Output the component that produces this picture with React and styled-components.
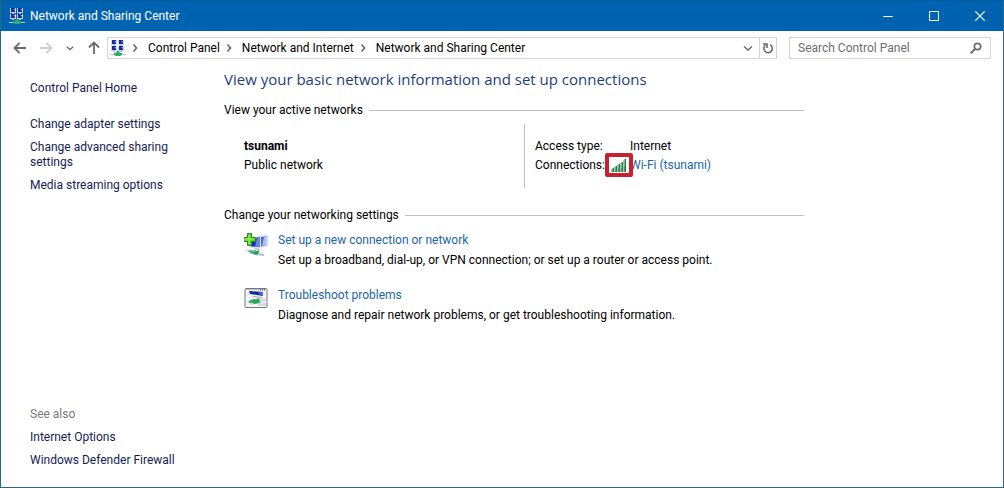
import styled, { createGlobalStyle } from "styled-components";

const crumbs = ["Control Panel", "Network and Internet", "Network and Sharing Center"];

const tasks = [
    "Change adapter settings",
    "Change advanced sharing settings",
    "Media streaming options",
];

const related = ["Internet Options", "Windows Defender Firewall"];

const NetworkIcon = () => (
    <svg width="16" height="16" viewBox="0 0 16 16" aria-hidden="true">
        {[[1, 0], [8, 0], [1, 6], [8, 6]].map(([x, y]) => (
            <g key={`${x}-${y}`}>
                <rect x={x} y={y} width="6" height="5" fill="#c6d2ee" />
                <rect x={x + 1} y={y} width="4" height="4" fill="#1a2a9c" />
                <path d={`M${x + 3} ${y + 1}h2v2z`} fill="#7f9be8" />
                <rect x={x + 2} y={y + 5} width="2" height="1" fill="#aeb8c6" />
            </g>
        ))}
        <path d="M7 11h2l1 2h2v2l-2 1H6l-2-1v-2h2z" fill="#2fae6b" />
        <path d="M0 14h4v1H0zM12 14h4v1h-4z" fill="#b5cdd0" />
    </svg>
);

const Chevron = ({ down, size = 10 }) => (
    <svg width={size} height={size} viewBox="0 0 10 10" fill="none" stroke="currentColor" strokeWidth="1.6" aria-hidden="true">
        <path d={down ? "M1 3.500 5 7l4-3.500" : "M3.500 1.500 6.500 5l-3 3.500"} />
    </svg>
);

const Arrow = ({ turn = 0 }) => (
    <svg width="14" height="14" viewBox="0 0 14 14" fill="none" stroke="currentColor" strokeWidth="1.8" aria-hidden="true">
        <path transform={`rotate(${turn} 7 7)`} d="M13 7H2M6.500 2 1.500 7l5 5" />
    </svg>
);

const RefreshIcon = () => (
    <svg width="12" height="12" viewBox="0 0 12 12" fill="none" stroke="currentColor" strokeWidth="1.6" aria-hidden="true">
        <path d="M8.200 2.800A4.200 4.200 0 1 1 3.400 3.200" />
        <path d="M1 2h4v4" />
    </svg>
);

const SearchIcon = () => (
    <svg width="12" height="12" viewBox="0 0 12 12" fill="none" stroke="currentColor" aria-hidden="true">
        <circle cx="7.500" cy="4.500" r="3.200" strokeWidth="1.700" />
        <path d="M5.200 6.800.8 11.200" strokeWidth="2" />
    </svg>
);

const SignalIcon = () => (
    <svg width="16" height="14" viewBox="0 0 16 14" aria-hidden="true">
        {[3, 5, 7, 9, 12].map((h, i) => (
            <g key={h}>
                <path d={`M${i * 3 + 0.5} ${14 - h}l2.500-1.500v${h + 1.5}h-2.500z`} fill="#4a9a66" />
                <path d={`M${i * 3 + 0.5} ${14 - h}l1-.6v${h * 0.6}h-1z`} fill="#a5d3b2" />
                <path d={`M${i * 3 + 2.4} ${13 - h}h.6v${h + 1}h-.6z`} fill="#24603a" />
            </g>
        ))}
    </svg>
);

const SetupIcon = () => (
    <svg width="24" height="24" viewBox="0 0 24 24" aria-hidden="true">
        <path d="m15 3 9-1v11l-8 2z" fill="#cbd6f2" />
        <path d="m17 4 5-.500V12l-5 1.500z" fill="#4a66cf" />
        <path d="m20 3.700 2-.2V12l-4 1z" fill="#a9bdf2" />
        <path d="M6 5 17 3v12L6 14.500z" fill="#d5ddf0" />
        <path d="m7 6 9-2v10l-9-.500z" fill="#1730b4" />
        <path d="m13 4.600 3-.6v10l-5-.300z" fill="#6a82e0" />
        <path d="m11 15 4 .500 2 1.500-7-.500z" fill="#b5bcc9" />
        <path d="m0 17 6-1 14 5v2l-8-.500z" fill="#d3dde0" />
        <path d="m4 18 6-1 3 1 2-1v4l-3 1-5-2z" fill="#2ca35f" />
        <path d="m6 18 4-.700 2 .700-3 1z" fill="#8fd6ab" />
        <path d="m14 20 6 1v2l-6-1z" fill="#bcc8d0" />
        <path d="M3.500.5h4v4h4v4h-4v4h-4v-4h-4v-4h4z" fill="#5fd32f" stroke="#25861a" />
        <path d="M5 2v9M1 6h9" stroke="#a3f06b" />
    </svg>
);

const TroubleshootIcon = () => (
    <svg width="24" height="20" viewBox="0 0 24 20" aria-hidden="true">
        <rect x="1" y=".5" width="22" height="19" rx="1" fill="#f5f6f8" stroke="#747980" />
        <path d="M2 1.500h20" stroke="#b9c1ca" />
        <path d="M16 2h1M18 2h1M20 2h1" stroke="#26314c" />
        <path d="m5 3 14 1v4L6 6z" fill="#172a9c" />
        <path d="m14 3.700 5 .3v4l-3-.600z" fill="#4966c8" />
        <path d="m9 8 9 1v1L8 9z" fill="#a8b1c2" />
        <path d="m3 13 14-3 5 1v2L7 17z" fill="#d3dadf" />
        <path d="m5 13 5-2 2 .500 3-1.500 1 5-6 1-2-1.500-3 .500z" fill="#29a75a" />
        <path d="M15 15h7v3h-9z" fill="#d5dadf" />
    </svg>
);

const settings = [
    {
        title: "Set up a new connection or network",
        text: "Set up a broadband, dial-up, or VPN connection; or set up a router or access point.",
        Icon: SetupIcon,
    },
    {
        title: "Troubleshoot problems",
        text: "Diagnose and repair network problems, or get troubleshooting information.",
        Icon: TroubleshootIcon,
    },
];

const App = () => (
    <>
        <GlobalStyle />
        <Window>
            <TitleBar>
                <NetworkIcon />
                <Title>Network and Sharing Center</Title>
                <CaptionButton aria-label="Minimize">
                    <svg width="10" height="10" stroke="currentColor"><path d="M0 5.500h10" /></svg>
                </CaptionButton>
                <CaptionButton aria-label="Maximize">
                    <svg width="10" height="10" fill="none" stroke="currentColor"><path d="M.5.5h9v9h-9z" /></svg>
                </CaptionButton>
                <CaptionButton aria-label="Close">
                    <svg width="10" height="10" stroke="currentColor" strokeWidth="1.200"><path d="m0 0 10 10M10 0 0 10" /></svg>
                </CaptionButton>
            </TitleBar>
            <Toolbar>
                <NavButtons>
                    <IconButton aria-label="Back"><Arrow /></IconButton>
                    <IconButton aria-label="Forward" disabled><Arrow turn={180} /></IconButton>
                    <IconButton aria-label="Recent locations" $small><Chevron down size={8} /></IconButton>
                    <IconButton aria-label="Up"><Arrow turn={90} /></IconButton>
                </NavButtons>
                <AddressBar aria-label="Address">
                    <NetworkIcon />
                    <Crumbs>
                        {crumbs.map(crumb => <li key={crumb}><Chevron /><a href="#">{crumb}</a></li>)}
                    </Crumbs>
                    <IconButton aria-label="Previous locations" $small><Chevron down /></IconButton>
                    <RefreshButton aria-label="Refresh"><RefreshIcon /></RefreshButton>
                </AddressBar>
                <SearchBox>
                    <input type="text" aria-label="Search Control Panel" placeholder="Search Control Panel" />
                    <SearchIcon />
                </SearchBox>
            </Toolbar>
            <Body>
                <Sidebar>
                    <SideLink href="#">Control Panel Home</SideLink>
                    <TaskList>
                        {tasks.map(task => <SideLink key={task} href="#">{task}</SideLink>)}
                    </TaskList>
                    <SeeAlso>
                        <span>See also</span>
                        {related.map(item => <SideLink key={item} href="#">{item}</SideLink>)}
                    </SeeAlso>
                </Sidebar>
                <Main>
                    <Heading>View your basic network information and set up connections</Heading>
                    <SectionTitle>View your active networks</SectionTitle>
                    <ActiveNetwork>
                        <NetworkName>
                            <strong>tsunami</strong>
                            <span>Public network</span>
                        </NetworkName>
                        <Details>
                            <dt>Access type:</dt>
                            <dd>Internet</dd>
                            <dt>Connections:</dt>
                            <Signal><SignalIcon /></Signal>
                            <dd><Link href="#">Wi-Fi (tsunami)</Link></dd>
                        </Details>
                    </ActiveNetwork>
                    <SectionTitle>Change your networking settings</SectionTitle>
                    <SettingList>
                        {settings.map(({ title, text, Icon }) => (
                            <Setting key={title}>
                                <Icon />
                                <div>
                                    <Link href="#">{title}</Link>
                                    <p>{text}</p>
                                </div>
                            </Setting>
                        ))}
                    </SettingList>
                </Main>
            </Body>
        </Window>
    </>
);

const GlobalStyle = createGlobalStyle`
    * { box-sizing: border-box; }

    body {
        margin: 0;
        background: #fff;
        color: #000;
        font-family: Roboto, "Open Sans", sans-serif;
        font-size: 12px;
        line-height: 15px;
    }

    button, input {
        font: inherit;
        color: inherit;
        border: 0;
        padding: 0;
        background: none;
    }

    a { text-decoration: none; color: inherit; }
    a:hover { text-decoration: underline; }
    svg { flex: none; display: block; }
    p, ul, dl, dd { margin: 0; padding: 0; }
`

const Window = styled.div`
    min-height: 100vh;
    display: flex;
    flex-direction: column;
    border: 1px solid #2b6787;
    border-top-color: #0a5a9c;
`

const TitleBar = styled.header`
    display: flex;
    align-items: center;
    height: 30px;
    padding-left: 8px;
    background: #0063b1;
    color: #fff;
`

const Title = styled.span`
    flex: 1;
    padding-left: 5px;
`

const CaptionButton = styled.button`
    width: 46px;
    height: 30px;
    display: flex;
    align-items: center;
    justify-content: center;

    &:hover { background: #1a74bb; }
`

const Toolbar = styled.div`
    display: flex;
    align-items: center;
    padding: 6px 12px 0 6px;
`

const NavButtons = styled.div`
    display: flex;
    align-items: center;
    width: 100px;
    flex: none;
`

const IconButton = styled.button`
    display: flex;
    align-items: center;
    justify-content: center;
    width: ${p => p.$small ? 22 : 27}px;
    height: 20px;
    color: #6b6b6b;

    &:disabled { color: #d0d0d0; }
`

const AddressBar = styled.nav`
    flex: 1;
    min-width: 0;
    display: flex;
    align-items: center;
    height: 22px;
    padding-left: 2px;
    border: 1px solid #d4d4d4;
`

const Crumbs = styled.ul`
    flex: 1;
    display: flex;
    list-style: none;

    li {
        display: flex;
        align-items: center;
    }

    svg {
        margin: 0 8px 0 4px;
        color: #666;
    }
`

const RefreshButton = styled(IconButton)`
    width: 17px;
    border-left: 1px solid #d4d4d4;
`

const SearchBox = styled.label`
    display: flex;
    align-items: center;
    width: 202px;
    height: 22px;
    margin-left: 12px;
    padding: 0 8px;
    border: 1px solid #d4d4d4;
    color: #6b6b6b;

    input {
        flex: 1;
        min-width: 0;
        outline: none;
    }

    input::placeholder { color: #6d6d6d; opacity: 1; }
`

const Body = styled.div`
    flex: 1;
    display: flex;
`

const Sidebar = styled.aside`
    width: 223px;
    flex: none;
    display: flex;
    flex-direction: column;
    align-items: flex-start;
    padding: 22px 40px 19px 29px;
`

const SideLink = styled.a`
    color: #151c55;
`

const TaskList = styled.nav`
    display: flex;
    flex-direction: column;
    gap: 8px;
    margin-top: 21px;
`

const SeeAlso = styled.nav`
    display: flex;
    flex-direction: column;
    gap: 8px;
    margin-top: auto;
    color: #7a7a7a;
`

const Main = styled.main`
    flex: 1;
    min-width: 0;
    max-width: 580px;
    padding-top: 10px;
`

const Heading = styled.h1`
    margin: 0 0 14px;
    font-family: "Open Sans", sans-serif;
    font-size: 15px;
    line-height: 20px;
    font-weight: 400;
    color: #1c3f7c;
`

const SectionTitle = styled.h2`
    display: flex;
    align-items: center;
    gap: 6px;
    margin: 0;
    font-size: 12px;
    font-weight: 400;

    &::after {
        content: "";
        flex: 1;
        height: 1px;
        background: #bfbfbf;
    }
`

const ActiveNetwork = styled.section`
    display: flex;
    margin: 6px 0 20px 20px;
`

const NetworkName = styled.div`
    flex: 0 1 280px;
    display: grid;
    align-content: center;
    gap: 4px;
`

const Details = styled.dl`
    flex: 1;
    display: grid;
    grid-template-columns: 76px 16px 1fr;
    gap: 4px 0;
    align-content: center;
    height: 64px;
    padding-left: 10px;
    border-left: 1px solid #bfbfbf;

    dd {
        grid-column: 3;
        padding-left: 3px;
    }
`

const Link = styled.a`
    color: #1a66a8;
`

const Signal = styled.dd`
    && {
        grid-column: 2;
        padding: 0;
        position: relative;
    }

    /* highlight frame around the signal strength */
    &::after {
        content: "";
        position: absolute;
        inset: -5px -6px -4px;
        border: 4px solid #c9202f;
        border-radius: 2px;
    }
`

const SettingList = styled.div`
    display: grid;
    gap: 20px;
    padding: 10px 0 0 20px;
`

const Setting = styled.div`
    display: flex;
    gap: 10px;

    p { margin-top: 5px; }
`

export default App;
